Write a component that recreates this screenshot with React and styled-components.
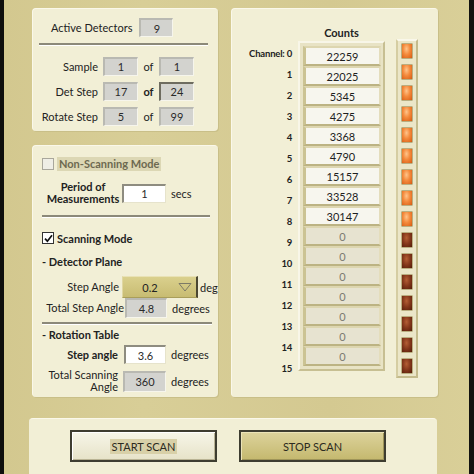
import React from 'react';
import styled, { createGlobalStyle } from 'styled-components';

const GlobalStyle = createGlobalStyle`
  body {
    margin: 0;
    font-family: Lato, "Noto Sans", Arial, sans-serif;
    color: #222;
  }
`;

const FS = '11px';

const counts = [22259, 22025, 5345, 4275, 3368, 4790, 15157, 33528, 30147, 0, 0, 0, 0, 0, 0, 0];
const activeCount = 9;

const steps = [
  { label: 'Sample', a: '1', b: '1' },
  { label: 'Det Step', a: '17', b: '24', boldOf: true, control: true },
  { label: 'Rotate Step', a: '5', b: '99' },
];

export default function App() {
  return (
    <Frame>
      <GlobalStyle />
      <TopArea>
        <LeftCol>
          <Panel $h={123}>
            <ActiveRow>
              <Text>Active Detectors</Text>
              <Indicator $w={34}>{activeCount}</Indicator>
            </ActiveRow>
            <Separator $top={6} $left={6} $right={10} />
            <StepGrid>
              {steps.map(s => (
                <React.Fragment key={s.label}>
                  <GridLabel>{s.label}</GridLabel>
                  <Indicator $w={35}>{s.a}</Indicator>
                  <OfText $bold={s.boldOf}>of</OfText>
                  <Indicator $w={35} $control={s.control}>{s.b}</Indicator>
                </React.Fragment>
              ))}
            </StepGrid>
          </Panel>

          <Panel $h={252} $pad="11px 0 0 9px">
            <CheckRow>
              <CheckBox $disabled />
              <DisabledLabel>Non-Scanning Mode</DisabledLabel>
            </CheckRow>
            <PeriodRow>
              <PeriodLabel>Period of<br />Measurements</PeriodLabel>
              <Input $w={44} $h={19}>1</Input>
              <Unit>secs</Unit>
            </PeriodRow>
            <Separator $top={10} $left={0} $right={8} />
            <CheckRow $top={13}>
              <CheckBox>
                <svg width="9" height="9" viewBox="0 0 9 9">
                  <path d="M1 4.6 L3.4 7.2 L8 1.2" fill="none" stroke="#111" strokeWidth="1.7" />
                </svg>
              </CheckBox>
              <BoldText>Scanning Mode</BoldText>
            </CheckRow>
            <Heading $top={10}>- Detector Plane</Heading>
            <FieldRow $top={7}>
              <FieldLabel $w={77}>Step Angle</FieldLabel>
              <Dropdown>
                <DropValue>0.2</DropValue>
                <DropArrow>
                  <svg width="14" height="10" viewBox="0 0 14 10">
                    <path d="M1 1.5 H13 L7 9 Z" fill="none" stroke="#7d7a66" strokeWidth="1" />
                  </svg>
                </DropArrow>
              </Dropdown>
              <Unit $ml={2}>deg</Unit>
            </FieldRow>
            <FieldRow>
              <FieldLabel $w={82}>Total Step Angle</FieldLabel>
              <Indicator $w={42} $h={20} $ml={1}>4.8</Indicator>
              <Unit>degrees</Unit>
            </FieldRow>
            <Separator $top={4} $left={0} $right={6} />
            <Heading $top={3}>- Rotation Table</Heading>
            <FieldRow $top={3}>
              <FieldLabel $w={76} $bold>Step angle</FieldLabel>
              <Input $w={42} $h={19} $ml={6}>3.6</Input>
              <Unit>degrees</Unit>
            </FieldRow>
            <FieldRow $top={5}>
              <FieldLabel $w={76} $lh={12}>Total Scanning<br />Angle</FieldLabel>
              <Indicator $w={43} $h={21} $ml={5}>360</Indicator>
              <Unit>degrees</Unit>
            </FieldRow>
          </Panel>
        </LeftCol>

        <Panel $h={389} $w={207} $pad="17px 0 0 0" $row>
          <ChannelCol>
            {counts.map((_, i) => (
              <ChannelLabel key={i}>{i === 0 ? 'Channel: 0' : i}</ChannelLabel>
            ))}
          </ChannelCol>
          <ArrayCol>
            <Title>Counts</Title>
            <ArrayFrame>
              {counts.map((c, i) => (
                <Cell key={i} $active={i < activeCount}>{c}</Cell>
              ))}
            </ArrayFrame>
          </ArrayCol>
          <LedFrame>
            {counts.map((_, i) => (
              <Led key={i} $on={i < activeCount} />
            ))}
          </LedFrame>
        </Panel>
      </TopArea>

      <BottomPanel>
        <ScanButton $light>
          <ButtonText $highlight>START SCAN</ButtonText>
        </ScanButton>
        <ScanButton>
          <ButtonText>STOP SCAN</ButtonText>
        </ScanButton>
      </BottomPanel>
    </Frame>
  );
}

const Frame = styled.div`
  width: 474px;
  height: 474px;
  box-sizing: border-box;
  overflow: hidden;
  background: linear-gradient(90deg, #d3c88f 0%, #d8ce97 30%, #d4c991 70%, #d9cf98 100%);
  border-left: 4px solid #0e0e0c;
  border-right: 5px solid #121210;
  padding: 8px 0 0 25px;
  display: flex;
  flex-direction: column;
  font-size: ${FS};
`;

const TopArea = styled.div`
  display: flex;
  gap: 13px;
  padding-left: 3px;
`;

const LeftCol = styled.div`
  width: 186px;
  display: flex;
  flex-direction: column;
  gap: 14px;
`;

const Panel = styled.div`
  box-sizing: border-box;
  width: ${p => (p.$w ? `${p.$w}px` : '100%')};
  height: ${p => p.$h}px;
  padding: ${p => p.$pad || '0'};
  display: flex;
  flex-direction: ${p => (p.$row ? 'row' : 'column')};
  align-items: flex-start;
  background: #f2efd6;
  border-radius: 4px;
  border-top: 1px solid #faf8ea;
  border-left: 1px solid #faf8ea;
  box-shadow: 1px 1px 0 #c9bf88;
`;

const Text = styled.span`
  font-size: ${FS};
  white-space: nowrap;
`;

const BoldText = styled.span`
  font-size: ${FS};
  font-weight: 700;
  white-space: nowrap;
`;

const ActiveRow = styled.div`
  display: flex;
  align-items: center;
  gap: 7px;
  margin: 9px 0 0 18px;
  height: 19px;
`;

const Separator = styled.div`
  align-self: stretch;
  height: 2px;
  margin: ${p => p.$top}px ${p => p.$right}px 0 ${p => p.$left}px;
  background: #8c8979;
  border-bottom: 1px solid #ffffff;
`;

const StepGrid = styled.div`
  display: grid;
  grid-template-columns: 70px 35px 21px 35px;
  grid-auto-rows: 20px;
  row-gap: 5px;
  margin-top: 10px;
  align-items: center;
`;

const GridLabel = styled.span`
  text-align: right;
  padding-right: 5px;
  white-space: nowrap;
`;

const OfText = styled.span`
  text-align: center;
  font-weight: ${p => (p.$bold ? 700 : 400)};
`;

const Indicator = styled.div`
  box-sizing: border-box;
  flex-shrink: 0;
  width: ${p => p.$w}px;
  height: ${p => p.$h || 19}px;
  margin-left: ${p => p.$ml || 0}px;
  display: flex;
  align-items: center;
  justify-content: center;
  background: #d3d3cf;
  color: #2a2a2a;
  font-size: ${FS};
  border-top: 2px solid ${p => (p.$control ? '#6e6c60' : '#b9b9b2')};
  border-left: 2px solid ${p => (p.$control ? '#6e6c60' : '#b9b9b2')};
  border-bottom: 1px solid #f6f5ec;
  border-right: 1px solid #f6f5ec;
`;

const Input = styled(Indicator)`
  background: #ffffff;
  border-top: 2px solid #8e8c80;
  border-left: 2px solid #8e8c80;
  border-bottom: 1px solid #e6e3cc;
  border-right: 1px solid #e6e3cc;
`;

const CheckRow = styled.div`
  display: flex;
  align-items: center;
  gap: 3px;
  height: 14px;
  margin-top: ${p => p.$top || 0}px;
`;

const CheckBox = styled.div`
  box-sizing: border-box;
  width: 12px;
  height: 12px;
  display: flex;
  align-items: center;
  justify-content: center;
  background: ${p => (p.$disabled ? '#efeee6' : '#ffffff')};
  border: 1px solid ${p => (p.$disabled ? '#a9a79c' : '#333')};
`;

const DisabledLabel = styled.span`
  font-weight: 700;
  font-size: ${FS};
  color: #6d6950;
  background: #dcd7b4;
  padding: 0 2px;
  line-height: 14px;
  white-space: nowrap;
`;

const PeriodRow = styled.div`
  display: flex;
  align-items: center;
  margin-top: 10px;
`;

const PeriodLabel = styled.div`
  width: 76px;
  flex-shrink: 0;
  margin-left: 3px;
  margin-right: 1px;
  text-align: center;
  font-weight: 700;
  font-size: ${FS};
  line-height: 12px;
  white-space: nowrap;
`;

const Unit = styled.span`
  margin-left: ${p => (p.$ml != null ? p.$ml : 5)}px;
  font-size: ${FS};
  white-space: nowrap;
`;

const Heading = styled.div`
  font-weight: 700;
  font-size: ${FS};
  line-height: 14px;
  margin-top: ${p => p.$top}px;
  white-space: nowrap;
`;

const FieldRow = styled.div`
  display: flex;
  align-items: center;
  margin-top: ${p => p.$top || 0}px;
`;

const FieldLabel = styled.div`
  width: ${p => p.$w}px;
  flex-shrink: 0;
  text-align: right;
  font-size: ${FS};
  font-weight: ${p => (p.$bold ? 700 : 400)};
  line-height: ${p => p.$lh || 14}px;
  white-space: nowrap;
`;

const Dropdown = styled.div`
  box-sizing: border-box;
  width: 76px;
  height: 22px;
  margin-left: 3px;
  display: flex;
  align-items: center;
  background: linear-gradient(#dad08d, #c8bc72);
  border-top: 1px solid #e9e2b6;
  border-left: 1px solid #e0d7a2;
  border-right: 2px solid #4b4732;
  border-bottom: 1px solid #a99e5a;
`;

const DropValue = styled.span`
  width: 54px;
  text-align: center;
  font-size: ${FS};
`;

const DropArrow = styled.span`
  display: flex;
  align-items: center;
  padding-left: 1px;
  height: 16px;
`;

const ChannelCol = styled.div`
  width: 60px;
  padding-top: 17px;
  display: flex;
  flex-direction: column;
`;

const ChannelLabel = styled.div`
  height: 21px;
  line-height: 21px;
  text-align: right;
  font-weight: 700;
  font-size: 9.5px;
  letter-spacing: -0.2px;
  white-space: nowrap;
`;

const ArrayCol = styled.div`
  width: 87px;
  margin-left: 6px;
  display: flex;
  flex-direction: column;
`;

const Title = styled.div`
  height: 14px;
  line-height: 14px;
  text-align: center;
  font-weight: 700;
  font-size: ${FS};
`;

const ArrayFrame = styled.div`
  margin-top: 1px;
  padding: 3px 2px 3px 3px;
  display: flex;
  flex-direction: column;
  background: #e8e3c5;
  border-top: 2px solid #f8f6e8;
  border-left: 2px solid #f8f6e8;
  border-right: 2px solid #c7bf92;
  border-bottom: 2px solid #c7bf92;
`;

const Cell = styled.div`
  box-sizing: border-box;
  width: 78px;
  height: 20px;
  display: flex;
  align-items: center;
  justify-content: center;
  font-size: ${FS};
  color: ${p => (p.$active ? '#1e1e1e' : '#7c7a70')};
  background: ${p => (p.$active ? '#f7f6ee' : '#e7e3d0')};
  border-top: 2px solid #ddd6b0;
  border-left: 3px solid #cbc393;
  border-right: 2px solid #e4ddbc;
  border-bottom: 2px solid #bcb383;
`;

const LedFrame = styled.div`
  margin: 13px 0 0 11px;
  padding: 2px 3px;
  display: flex;
  flex-direction: column;
  gap: 5px;
  background: #ebe6c8;
  border-top: 2px solid #f9f7ea;
  border-left: 2px solid #d5cda2;
  border-right: 2px solid #c4bb8c;
  border-bottom: 2px solid #c4bb8c;
`;

const Led = styled.div`
  width: 12px;
  height: 16px;
  box-sizing: border-box;
  border: 1px solid #b9ae80;
  border-radius: 1px;
  background: ${p =>
    p.$on
      ? 'radial-gradient(ellipse at 45% 35%, #ffc48a 0%, #f48a3c 45%, #d55a12 100%)'
      : 'radial-gradient(ellipse at 45% 35%, #b45e34 0%, #83361a 50%, #521c08 100%)'};
`;

const BottomPanel = styled.div`
  box-sizing: border-box;
  width: 408px;
  height: 62px;
  flex-shrink: 0;
  margin-top: 21px;
  padding: 11px 0 0 41px;
  display: flex;
  gap: 22px;
  background: #f2efd6;
  border-radius: 4px;
  border-top: 1px solid #faf8ea;
`;

const ScanButton = styled.div`
  box-sizing: border-box;
  width: 147px;
  height: 32px;
  display: flex;
  align-items: center;
  justify-content: center;
  border: 2px solid #3e3d30;
  background: ${p =>
    p.$light ? 'linear-gradient(#f7f6e8, #e6e2c8)' : 'linear-gradient(#ddd39c, #c4b86e)'};
  box-shadow: inset 1px 1px 0 ${p => (p.$light ? '#ffffff' : '#ece4b8')},
    inset -1px -1px 0 ${p => (p.$light ? '#b9b394' : '#9e9458')};
`;

const ButtonText = styled.span`
  font-size: 11px;
  color: #2b2a20;
  padding: 1px 2px;
  background: ${p => (p.$highlight ? '#d8d0a8' : 'transparent')};
  white-space: nowrap;
`;
